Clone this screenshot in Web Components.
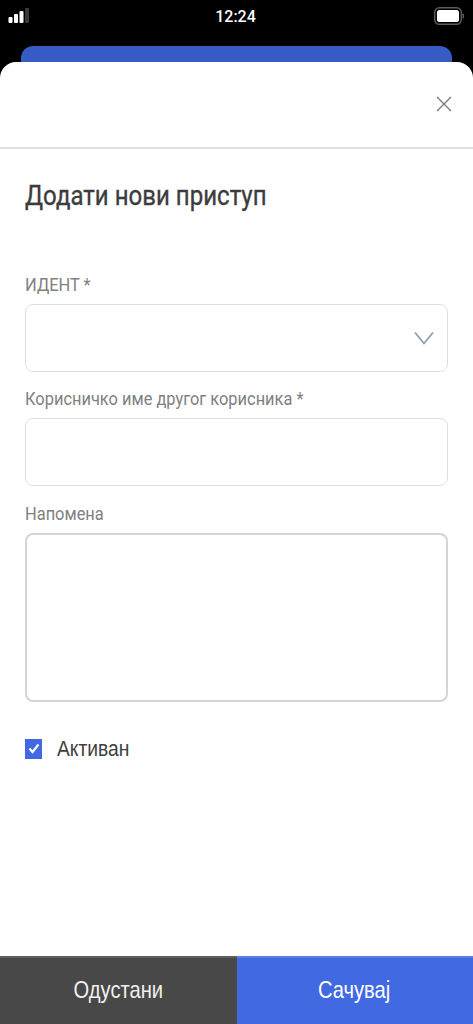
<!DOCTYPE html>
<html>
<head>
<meta charset="utf-8">
<style>
html,body{margin:0;padding:0;background:#000;}
body{width:473px;height:1024px;overflow:hidden;font-family:Roboto,"Liberation Sans",sans-serif;}
</style>
</head>
<body>
<access-page></access-page>
<script>
class StatusBar extends HTMLElement{
    constructor(){
        super();
        this.attachShadow({ mode: "open" });
        this.shadowRoot.innerHTML = `
        <style>
        :host{display:flex;height:46px;align-items:flex-start;justify-content:space-between;background:#000;padding:0 9px 0 8px;box-sizing:border-box;}
        #time{position:absolute;left:0;right:2px;top:6px;text-align:center;color:#fff;font:500 17px/20px Roboto,sans-serif;transform:scaleX(0.94);}
        svg{display:block;margin-top:7px;}
        </style>
        <svg width="22" height="17" viewBox="0 0 22 17">
            <rect x="0.5" y="10" width="4" height="6" rx="1" fill="#fff"/>
            <rect x="6" y="7" width="4" height="9" rx="1" fill="#fff"/>
            <rect x="11.5" y="4" width="4" height="12" rx="1" fill="#fff"/>
            <rect x="17" y="1" width="4" height="15" rx="1" fill="#3a3a3a"/>
        </svg>
        <div id="time">12:24</div>
        <svg width="30" height="18" viewBox="0 0 30 18">
            <rect x="0.75" y="0.75" width="26.5" height="16.5" rx="4.5" fill="none" stroke="#5a5a5a" stroke-width="1.5"/>
            <rect x="3" y="3" width="22" height="12" rx="2.5" fill="#fff"/>
            <rect x="28.5" y="6.5" width="1.5" height="5" rx="0.7" fill="#5a5a5a"/>
        </svg>
        `;
    }
}
window.customElements.define("status-bar", StatusBar);

class FormField extends HTMLElement{
    constructor(){
        super();
        this.attachShadow({ mode: "open" });
    }
    connectedCallback(){
        let alto = this.getAttribute("alto") || "68";
        let borde = this.getAttribute("borde") || "1.5px solid #dcdfe2";
        this.shadowRoot.innerHTML = `
        <style>
        :host{display:block;}
        #label{font:400 19px/22px Roboto,sans-serif;color:#808080;height:30px;padding-top:2px;}
        #label span{display:inline-block;white-space:nowrap;transform:scaleX(0.864);transform-origin:left center;}
        #box{height:${alto}px;box-sizing:border-box;border:${borde};border-radius:8px;background:#fff;display:flex;align-items:center;justify-content:flex-end;padding-right:13px;}
        </style>
        <div id="label"><span>${this.getAttribute("label")}</span></div>
        <div id="box"><slot></slot></div>
        `;
    }
}
window.customElements.define("form-field", FormField);

class AccessPage extends HTMLElement{
    constructor(){
        super();
        this.attachShadow({ mode: "open" });
        this.shadowRoot.innerHTML = `
        <style>
        :host{display:flex;flex-direction:column;height:1024px;background:#000;}
        #peek{height:30px;margin:0 21px -14px;background:#375bc4;border-radius:12px 12px 0 0;}
        #sheet{position:relative;flex:1;display:flex;flex-direction:column;background:#fff;border-radius:16px 16px 0 0;}
        #head{height:87px;box-sizing:border-box;border-bottom:2px solid #dedede;display:flex;justify-content:flex-end;align-items:center;padding:0 21px 2px 0;}
        #body{flex:1;padding:0 25.5px 0 25px;}
        h1{margin:0;font:400 27px/30px Roboto,sans-serif;-webkit-text-stroke:0.35px #3c3c3c;color:#3c3c3c;padding-top:32px;height:91px;}
        h1 span{display:inline-block;white-space:nowrap;transform:scaleX(0.89);transform-origin:left center;}
        form-field{margin-bottom:14px;}
        form-field.mas{margin-bottom:15px;}
        #activo{display:flex;align-items:center;gap:15px;margin-top:34px;font:400 22px/24px "Liberation Sans",sans-serif;color:#404040;}
        #activo span{display:inline-block;transform:scaleX(0.875);transform-origin:left center;padding-top:1px;}
        #check{width:17px;height:20px;background:#4169e1;display:flex;align-items:center;justify-content:center;}
        #foot{display:flex;height:68px;}
        .btn{flex:1;display:flex;align-items:center;justify-content:center;color:#fff;font:400 24px/26px "Liberation Sans",sans-serif;padding-bottom:2px;box-sizing:border-box;}
        .btn span{display:inline-block;transform:scaleX(0.84);}
        #no{background:#484848;border-top:2px solid #5e5e5e;color:#f0f0f0;}
        #si{background:#4169e1;border-top:2px solid #5a7fe8;}
        #si span{margin-right:2px;}
        </style>
        <status-bar></status-bar>
        <div id="peek"></div>
        <div id="sheet">
            <div id="head">
                <svg width="16" height="16" viewBox="0 0 16 16"><path d="M1 1L15 15M15 1L1 15" stroke="#7c7c7c" stroke-width="1.4" fill="none"/></svg>
            </div>
            <div id="body">
                <h1><span>Додати нови приступ</span></h1>
                <form-field label="ИДЕНТ *">
                    <svg width="20" height="14" viewBox="0 0 20 14"><path d="M1 1.5L10 12.5L19 1.5" stroke="#8b9aa8" stroke-width="1.6" fill="none"/></svg>
                </form-field>
                <form-field class="mas" label="Корисничко име другог корисника *"></form-field>
                <form-field label="Напомена" alto="169" borde="2px solid #d4d4d4"></form-field>
                <div id="activo">
                    <div id="check"><svg width="12" height="11" viewBox="0 0 12 11"><path d="M1.5 5.5L4.5 9L10.5 1.5" stroke="#fff" stroke-width="2.2" fill="none"/></svg></div>
                    <span>Активан</span>
                </div>
            </div>
            <div id="foot">
                <div class="btn" id="no"><span>Одустани</span></div>
                <div class="btn" id="si"><span>Сачувај</span></div>
            </div>
        </div>
        `;
    }
}
window.customElements.define("access-page", AccessPage);
</script>
</body>
</html>
